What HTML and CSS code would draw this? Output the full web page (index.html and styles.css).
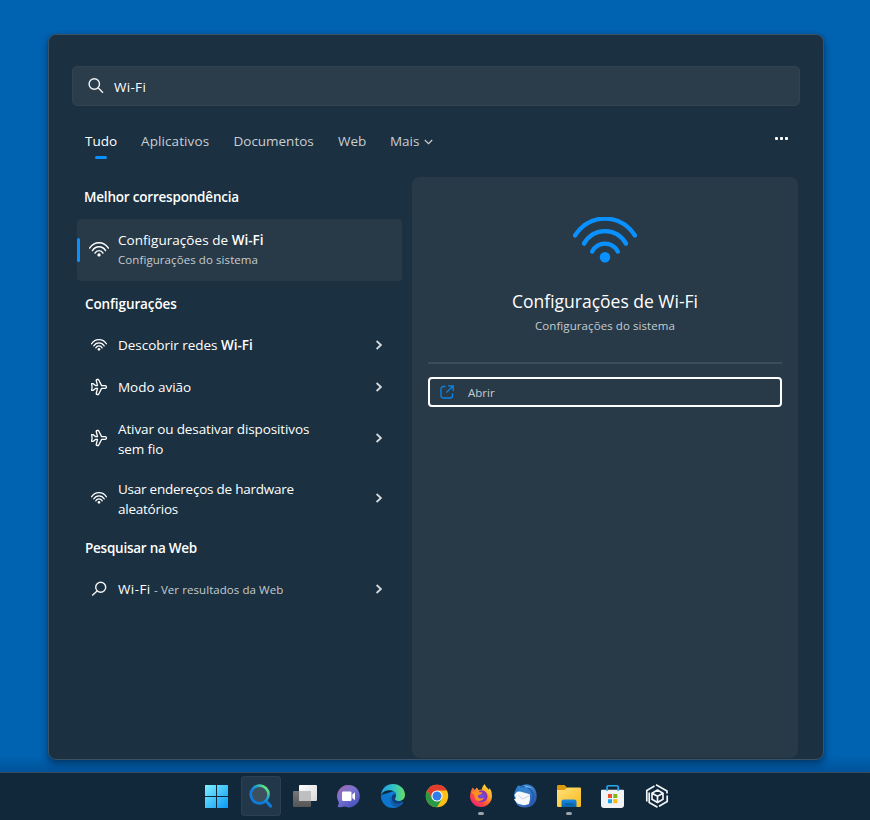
FILE: index.html
```html
<!DOCTYPE html>
<html lang="pt-BR">
<head>
<meta charset="utf-8">
<title>Pesquisar</title>
<link rel="stylesheet" href="styles.css">
</head>
<body>
<svg class="defs" width="0" height="0" aria-hidden="true">
  <symbol id="wifi" viewBox="0 0 64 46">
    <g fill="none" stroke="currentColor" stroke-linecap="round">
      <path d="M2 18.5C17-4 47-4 62 18.5"/>
      <path d="M11 26.5C21 10 43 10 53 26.5"/>
      <path d="M19.200 34.500C25 24 39 24 44.800 34.500"/>
    </g>
    <circle cx="32" cy="40.300" r="5.200" fill="currentColor"/>
  </symbol>
  <symbol id="plane" viewBox="0 0 18 18">
    <path d="M1.600 5.700H3.300L5.500 7.600H7.500L6.200 2.500Q6.200 1.500 7.100 1.500H8.500L11.600 7.600H15.300Q16.500 7.900 16.500 9T15.300 10.400H11.600L8.500 16.500H7.100Q6.200 16.500 6.200 15.500L7.500 10.400H5.500L3.300 12.300H1.600L2.100 9Z" fill="none" stroke="currentColor" stroke-width="1.300" stroke-linejoin="round"/>
  </symbol>
  <symbol id="chevron" viewBox="0 0 8 10">
    <path d="M1.600 1L5.900 5L1.600 9" fill="none" stroke="currentColor" stroke-width="1.800"/>
  </symbol>
</svg>

<main class="desktop">
  <section class="panel">
    <div class="search">
      <svg class="search-icon" viewBox="0 0 16 16"><circle cx="6.300" cy="6" r="5.200"/><path d="M10.100 9.800L15 14.700"/></svg>
      <span class="query">Wi-Fi</span>
    </div>
    <nav class="tabs">
      <span class="tab active">Tudo</span>
      <span class="tab apps">Aplicativos</span>
      <span class="tab">Documentos</span>
      <span class="tab">Web</span>
      <span class="tab">Mais <svg class="down" viewBox="0 0 9 6"><path d="M.8 1L4.500 4.700L8.200 1"/></svg></span>
      <span class="more"><i></i><i></i><i></i></span>
    </nav>
    <div class="columns">
      <div class="results">
        <h2 class="first">Melhor correspondência</h2>
        <div class="best">
          <span class="icon"><svg class="wifi-mid"><use href="#wifi"/></svg></span>
          <div>
            <div class="name best-name">Configurações de <b>Wi-Fi</b></div>
            <div class="sub">Configurações do sistema</div>
          </div>
        </div>
        <h2 class="second">Configurações</h2>
        <div class="row">
          <span class="icon"><svg class="wifi-small"><use href="#wifi"/></svg></span>
          <span class="name">Descobrir redes <b>Wi-Fi</b></span>
          <svg class="chev"><use href="#chevron"/></svg>
        </div>
        <div class="row">
          <span class="icon"><svg class="plane"><use href="#plane"/></svg></span>
          <span class="name">Modo avião</span>
          <svg class="chev"><use href="#chevron"/></svg>
        </div>
        <div class="row tall">
          <span class="icon"><svg class="plane"><use href="#plane"/></svg></span>
          <span class="name">Ativar ou desativar dispositivos<br>sem fio</span>
          <svg class="chev"><use href="#chevron"/></svg>
        </div>
        <div class="row tall">
          <span class="icon"><svg class="wifi-small"><use href="#wifi"/></svg></span>
          <span class="name tight">Usar endereços de hardware<br>aleatórios</span>
          <svg class="chev"><use href="#chevron"/></svg>
        </div>
        <h2 class="third">Pesquisar na Web</h2>
        <div class="row">
          <span class="icon"><svg class="lens" viewBox="0 0 16 16"><circle cx="9.700" cy="6.300" r="5"/><path d="M6.100 9.900L1.200 14.500"/></svg></span>
          <span class="name"><span class="term">Wi-Fi</span> <span class="hint">- Ver resultados da Web</span></span>
          <svg class="chev"><use href="#chevron"/></svg>
        </div>
      </div>
      <aside class="preview">
        <svg class="wifi-big"><use href="#wifi"/></svg>
        <h1>Configurações de Wi-Fi</h1>
        <p>Configurações do sistema</p>
        <hr>
        <button class="open">
          <svg viewBox="0 0 14 14"><path d="M5.500 1.500H3.500Q1 1.500 1 4V10.500Q1 13 3.500 13H10Q12.500 13 12.500 10.500V8.500M8 .8H13.200V6M13 1L6.500 7.500"/></svg>
          <span>Abrir</span>
        </button>
      </aside>
    </div>
  </section>
</main>

<footer class="taskbar">
  <svg class="app" viewBox="0 0 40 40">
    <defs><linearGradient id="win" gradientUnits="userSpaceOnUse" x1="8" y1="9" x2="31" y2="32"><stop stop-color="#7defff"/><stop offset="1" stop-color="#0a98f5"/></linearGradient></defs>
    <path fill="url(#win)" d="M8 9h11v11H8zM20 9h11v11H20zM8 21h11v11H8zM20 21h11v11H20z"/>
  </svg>
  <svg class="app selected" viewBox="0 0 40 40">
    <defs><linearGradient id="ring" x1="0" y1="1" x2="1" y2="0"><stop offset=".4" stop-color="#0f7bd8"/><stop offset=".65" stop-color="#20a6c9"/><stop offset=".85" stop-color="#5fe08a"/></linearGradient></defs>
    <path d="M25.500 25.500L29.500 30" stroke="#0f7bd8" stroke-width="3.200" stroke-linecap="round"/>
    <circle cx="18.600" cy="18.500" r="8.900" fill="#3d505e" stroke="url(#ring)" stroke-width="2.700"/>
  </svg>
  <svg class="app" viewBox="0 0 40 40">
    <defs><linearGradient id="tv" x2="1" y2="1"><stop stop-color="#fff"/><stop offset="1" stop-color="#d8d8d8"/></linearGradient><linearGradient id="tg" x2="0" y2="1"><stop stop-color="#777"/><stop offset="1" stop-color="#555"/></linearGradient></defs>
    <rect x="8" y="15" width="18" height="16" rx="1" fill="url(#tg)"/>
    <rect x="14" y="9" width="18" height="16" rx="1" fill="url(#tv)"/>
    <path d="M14 15h12v10H14z" fill="#bfbfbf"/>
  </svg>
  <svg class="app" viewBox="0 0 40 40">
    <defs><linearGradient id="chat" x1="0" y1="0" x2=".8" y2="1"><stop stop-color="#a568a5"/><stop offset=".45" stop-color="#7c72cf"/><stop offset="1" stop-color="#4350bd"/></linearGradient></defs>
    <path fill="url(#chat)" d="M19.700 9A11.200 11.200 0 1 1 15.500 30.600Q12.500 31.500 9 31L8.700 30Q10.100 28.600 9.800 26.200A11.200 11.200 0 0 1 19.700 9Z"/>
    <rect x="13" y="15.500" width="9.500" height="9.500" rx="1.200" fill="#fff"/><path d="M23.300 18.500L26 16.300V24.300L23.300 22Z" fill="#fff"/>
  </svg>
  <svg class="app" viewBox="0 0 40 40">
    <defs><linearGradient id="ed" x2="1"><stop stop-color="#2799df"/><stop offset=".5" stop-color="#2dc1c9"/><stop offset="1" stop-color="#65df63"/></linearGradient><linearGradient id="eb" x2="0" y2="1"><stop stop-color="#1384da"/><stop offset="1" stop-color="#12549f"/></linearGradient></defs>
    <path fill="#0c75ce" d="M8 19A12 12 0 0 0 20 32Q26 32 29.700 27.200L21 15Z"/>
    <path fill="url(#ed)" d="M8 19C8.500 12.500 13.500 8 20 8C27 8 32 13 32 18.800C32 23 29 25 26 25C23.200 25 21.800 23.800 21.800 22.700C21.800 21.800 23.200 21.300 23.200 19C23.200 16.200 19.800 14.200 16.300 14.200C12.500 14.200 9.500 16.200 8 19Z"/>
    <path fill="url(#eb)" d="M16.500 18.500C14.800 24.500 18.500 32 25.200 30.600C27 29.800 28.800 28.600 30 27C30.700 26 30.200 25.700 29.300 26.200C23.500 29.200 17.700 25.500 18.700 20.200C19.200 18.500 20 17.500 21.200 16.500C19 15.700 17.200 16.700 16.500 18.500Z"/>
    <path fill="#113e7c" d="M19 20C17.300 25.800 23 30 29 26.500L27.500 25Q22.500 25.800 21.800 22.700Q23.500 21 22.800 18.500Q20 17.500 19 20Z"/>
  </svg>
  <svg class="app" viewBox="0 0 40 40">
    <circle cx="20" cy="20" r="11.200" fill="#fbc116"/>
    <path fill="#e33b2e" d="M10.300 14.400A11.200 11.200 0 0 1 29.700 14.400H20L15.200 22.800Z"/>
    <path fill="#289a46" d="M10.300 14.400A11.200 11.200 0 0 0 20 31.200L24.900 22.800L15.200 22.800Z"/>
    <circle cx="20" cy="20" r="5.600" fill="#fff"/><circle cx="20" cy="20" r="4.500" fill="#2f7de9"/>
  </svg>
  <span class="app running"><svg viewBox="0 0 40 40">
    <defs><linearGradient id="ff" x1="1" y1="0" x2=".2" y2="1"><stop stop-color="#fff044"/><stop offset=".4" stop-color="#ffa425"/><stop offset=".7" stop-color="#ff4c3b"/><stop offset="1" stop-color="#eb237d"/></linearGradient><radialGradient id="fp"><stop stop-color="#6b56e8"/><stop offset="1" stop-color="#8e2cae"/></radialGradient></defs>
    <path fill="url(#ff)" d="M11.800 11.500L13.500 14L16 11.500L17.500 14L20.800 13.500Q21.200 10.500 23.500 8Q25 11.300 28 13.700L28.800 12Q31 15.500 31 20A11 11 0 1 1 9 20Q9.200 14.500 11.800 11.500Z"/>
    <circle cx="20.500" cy="20.300" r="6" fill="url(#fp)"/>
    <path fill="#ff8f25" d="M10.200 16.500Q13 14.300 17.200 14.800Q18.300 16.500 21.500 16.500Q20.500 18.500 17.500 19Q16 21.500 18.500 22.300Q21 23 23 21.800Q21.500 25 17.800 25Q13 24.300 13.500 19.500Q12.500 17.500 10.200 16.500Z"/>
  </svg></span>
  <svg class="app" viewBox="0 0 40 40">
    <defs><linearGradient id="tb" x1="0" x2="1" y2="1"><stop stop-color="#2583d6"/><stop offset=".5" stop-color="#3d7fc6"/><stop offset="1" stop-color="#2b43a0"/></linearGradient></defs>
    <path fill="url(#tb)" d="M11.500 12L13 9.500L15.500 10Q18.500 8.300 22 8.300C28 8.800 32 14 31.700 20.500C31.500 27 27 31.500 20.500 31.500C16 31.500 12.500 30 11 27L9 20Q9 16 11.500 12Z"/>
    <path fill="#1a5fb4" d="M11 16C15 9 24 10 27 18C28.500 22 26.500 28 23.500 30.800C29 27.500 30 21 28.500 16.500Q24.500 9.300 17 10Z"/>
    <path fill="#6bb0e6" d="M19 9Q24 9.500 27.500 12.500Q24 11.500 20.500 11.500Z"/>
    <path fill="#f7f8fb" d="M9.300 19L12 15.800L15 15.500L24.800 18.300Q25.700 23.500 24 28Q19.500 30 16 28.500L12.500 27.500L9 23.500L11 22.300Z"/>
    <path d="M13.500 19.500L18 23L24 19.700" fill="none" stroke="#b9c0cd" stroke-width=".7"/>
  </svg>
  <span class="app running"><svg viewBox="0 0 40 40">
    <defs><linearGradient id="fold" x1="0" y1="0" x2="1" y2="1"><stop stop-color="#ffe27b"/><stop offset="1" stop-color="#fbb91d"/></linearGradient><linearGradient id="tray" x2="0" y2="1"><stop stop-color="#1c8bdf"/><stop offset="1" stop-color="#0863ac"/></linearGradient></defs>
    <path fill="#db9a0c" d="M8 10.200Q8 9 9.200 9H15.500L18 11.500V15H8Z"/>
    <path fill="url(#fold)" d="M8 14H15.500L18.200 11.500H31Q32 11.500 32 12.500V29.700Q32 31 30.700 31H9.300Q8 31 8 29.700Z"/>
    <path fill="url(#tray)" d="M12.500 31V25.500Q12.500 23.500 14.500 23.500H25.500Q27.500 23.500 27.500 25.500V31Z"/>
    <rect x="16" y="27.500" width="8" height="1.200" rx=".6" fill="#0a569a"/>
  </svg></span>
  <svg class="app" viewBox="0 0 40 40">
    <path fill="#f1f2f4" d="M8 14.500Q8 13.700 8.800 13.700H30.200Q31 13.700 31 14.500V29Q31 32 28 32H11Q8 32 8 29Z"/>
    <path fill="none" stroke="#26a9ea" stroke-width="1.600" d="M14 15V11Q14 9.800 15.200 9.800H24Q25.200 9.800 25.200 11V15"/>
    <path fill="#f1502f" d="M15 18h4v4h-4z"/><path fill="#7cba16" d="M20.300 18h4v4h-4z"/><path fill="#18a4eb" d="M15 23.200h4v4h-4z"/><path fill="#fdb913" d="M20.300 23.200h4v4h-4z"/>
  </svg>
  <svg class="app" viewBox="0 0 40 40">
    <g fill="none" stroke="#f1f3f5" stroke-width="1.700">
      <path d="M9.800 25.500V14.500L17.500 10M19 8.800L30 15V17.500M30.200 19.500V25.500L22 30.300M20.500 31.300L12.200 26.500V16.500"/>
      <path d="M20.500 14L26 17.200V23.200L20.500 26.400L15 23.200V17.200ZM15 17.300L20.500 20.300L26 17.300M20.500 20.300V26"/>
    </g>
  </svg>
</footer>
</body>
</html>
```

FILE: styles.css
```css
* { box-sizing: border-box; }

body {
  margin: 0;
  width: 870px;
  height: 820px;
  overflow: hidden;
  display: flex;
  flex-direction: column;
  font-family: "Open Sans", "Noto Sans", sans-serif;
  font-size: 13.5px;
  color: #fff;
  background: #0063b1;
}

.defs { position: absolute; }
svg { display: block; flex: none; }

.desktop {
  height: 772px;
  padding: 34px 46px 0 48px;
  background: linear-gradient(#0063b1 755px, #00539a 772px);
}

.panel {
  width: 776px;
  height: 726px;
  padding: 31px 23px 0;
  border: 1px solid #3a5265;
  border-radius: 8px;
  background: #1b3040;
  box-shadow: 0 5px 9px #001b3d66, 0 1px 4px #001b3d55;
}

.search {
  display: flex;
  align-items: center;
  gap: 10px;
  height: 40px;
  width: 728px;
  padding-left: 15px;
  border-radius: 5px;
  background: #2b3d4b;
  border: 1px solid #304350;
}
.search-icon { width: 16px; height: 16px; margin-top: -1px; }
.search-icon, .lens, .down { fill: none; stroke: #f3f5f6; stroke-width: 1.4; }
.query { letter-spacing: .3px; padding-top: 1px; }

.tabs {
  display: grid;
  grid-template-columns: 56px 92.5px 104.5px 52px 1fr 16px;
  height: 71px;
  padding: 25px 9px 0 13px;
  line-height: 20px;
  color: #c9ced2;
}
.tab { letter-spacing: -.02px; }
.apps { letter-spacing: .1px; }
.tab.active { color: #fff; width: 32px; }
.active::after {
  content: "";
  display: block;
  width: 12px;
  height: 3px;
  margin: 5px 0 0 10px;
  border-radius: 2px;
  background: #0a91ff;
}
.down { display: inline-block; width: 9px; height: 6px; margin-left: 1px; vertical-align: 1px; stroke: #c9ced2; stroke-width: 1.2; }
.more { display: flex; gap: 2px; padding-top: 6px; }
.more i { width: 3px; height: 3px; border-radius: 1px; background: #fff; }

.columns { display: flex; gap: 10px; padding-left: 5px; }
.results { width: 325px; }

h2 {
  margin: 0;
  padding-left: 8px;
  font-size: 13.5px;
  font-weight: 600;
  line-height: 20px;
  letter-spacing: -.2px;
}
.first { height: 42px; padding-top: 10px; padding-left: 7px; }
.second { height: 43px; padding-top: 13px; letter-spacing: -.1px; }
.third { height: 40px; padding-top: 10px; letter-spacing: -.25px; }

.best, .row { display: flex; align-items: center; }
.best {
  height: 62px;
  padding-bottom: 1px;
  border-radius: 4px;
  background: #283a48;
}
.best::before { content: ""; width: 3px; height: 24px; border-radius: 2px; background: #0a91ff; margin: 1px -3px 0 0; }
.row { height: 42px; line-height: 20px; }
.tall { height: 60px; }
.tall .name { padding-top: 2px; letter-spacing: -.12px; }
.tall .tight { letter-spacing: -.24px; }
.icon { width: 41px; display: flex; justify-content: center; padding-left: 3px; }
.name { flex: 1; letter-spacing: -.03px; }
.best-name { line-height: 19px; letter-spacing: .04px; }
.name b { font-weight: 600; }
.sub { font-size: 11.5px; line-height: 19px; color: #c6ccd0; letter-spacing: .08px; }
.term { letter-spacing: .4px; }
.hint { font-size: 11.5px; color: #c6ccd0; letter-spacing: .07px; }
.chev { width: 8px; height: 10px; margin-right: 19px; color: #d7dbde; }
.plane { width: 18px; height: 18px; }
.lens { width: 16px; height: 16px; }
.wifi-mid { width: 20px; height: 15px; stroke-width: 4.5; }
.wifi-small { width: 16px; height: 12px; stroke-width: 4.8; }

.preview {
  width: 386px;
  height: 581px;
  padding: 40px 16px 0;
  display: flex;
  flex-direction: column;
  align-items: center;
  border-radius: 8px;
  background: #283a48;
}
.wifi-big { width: 64px; height: 46px; color: #0a91ff; stroke-width: 4.4; }
h1 { margin: 25px 0 0; font-size: 17.5px; font-weight: 400; line-height: 26px; }
p { margin: 2px 0 0; font-size: 11.5px; line-height: 20px; color: #c6ccd0; letter-spacing: .08px; }
hr { width: 354px; height: 2px; margin: 26px 0 13px; border: 0; background: #3c4d59; }
.open {
  width: 354px;
  height: 30px;
  padding: 0 10px;
  display: flex;
  align-items: center;
  gap: 14px;
  border: 2px solid #fff;
  border-radius: 4px;
  background: none;
  color: #c6ccd0;
  font: 11.5px "Open Sans", "Noto Sans", sans-serif;
}
.open svg { width: 14px; height: 14px; fill: none; stroke: #0a85e8; stroke-width: 1.3; }

.taskbar {
  height: 48px;
  padding: 3px 0 0 197px;
  display: flex;
  gap: 4px;
  border-top: 1px solid #334c61;
  background: #11283b;
}
.app { width: 40px; height: 40px; flex: none; }
.selected { border-radius: 4px; background: #22384a; box-shadow: inset 0 0 0 1px #2c4051; }
.running svg { width: 40px; height: 40px; }
.running::after {
  content: "";
  display: block;
  width: 6px;
  height: 3px;
  margin: -4px auto 0;
  border-radius: 2px;
  background: #9ba3ab;
}
```
